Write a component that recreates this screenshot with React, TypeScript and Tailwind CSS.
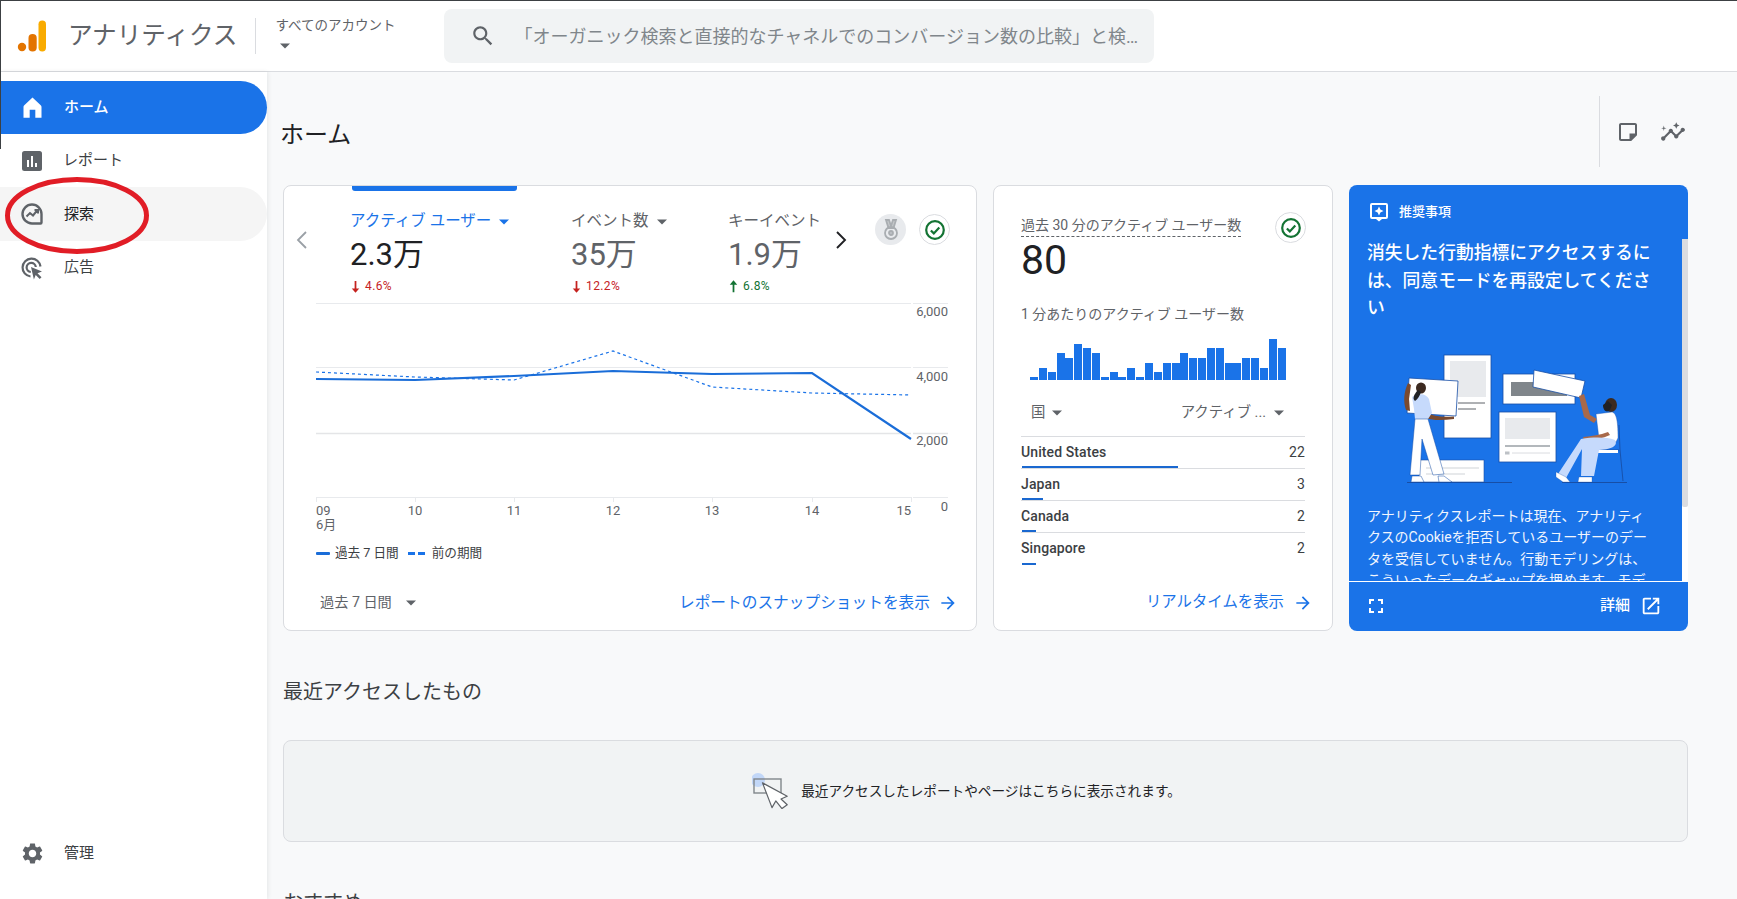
import React from "react";

const Icon = ({ d, className = "", size = 24, fill = "currentColor" }: { d: string; className?: string; size?: number; fill?: string }) => (
  <svg width={size} height={size} viewBox="0 0 24 24" className={`shrink-0 ${className}`} fill={fill}>
    <path d={d} />
  </svg>
);

const P = {
  home: "M4 21V11.5C4 10.9 4.2 10.4 4.7 10L12 3l7.3 7c.5.4.7.9.7 1.5V21h-5.5v-7h-5v7z",
  search:
    "M15.5 14h-.79l-.28-.27C15.41 12.59 16 11.11 16 9.5 16 5.91 13.09 3 9.5 3S3 5.91 3 9.5 5.91 16 9.5 16c1.61 0 3.09-.59 4.23-1.57l.27.28v.79l5 4.99L20.49 19l-4.99-5zm-6 0C7.01 14 5 11.99 5 9.5S7.01 5 9.5 5 14 7.01 14 9.5 11.99 14 9.5 14z",
  gear: "M19.14 12.94c.04-.3.06-.61.06-.94 0-.32-.02-.64-.07-.94l2.03-1.58c.18-.14.23-.41.12-.61l-1.92-3.32c-.12-.22-.37-.29-.59-.22l-2.39.96c-.5-.38-1.03-.7-1.62-.94l-.36-2.54c-.04-.24-.24-.41-.48-.41h-3.84c-.24 0-.43.17-.47.41l-.36 2.54c-.59.24-1.13.57-1.62.94l-2.39-.96c-.22-.08-.47 0-.59.22L2.74 8.87c-.12.21-.08.47.12.61l2.03 1.58c-.05.3-.09.63-.09.94s.02.64.07.94l-2.03 1.58c-.18.14-.23.41-.12.61l1.92 3.32c.12.22.37.29.59.22l2.39-.96c.5.38 1.03.7 1.62.94l.36 2.54c.05.24.24.41.48.41h3.84c.24 0 .44-.17.47-.41l.36-2.54c.59-.24 1.13-.56 1.62-.94l2.39.96c.22.08.47 0 .59-.22l1.92-3.32c.12-.22.07-.47-.12-.61l-2.01-1.58zM12 15.6c-1.98 0-3.6-1.62-3.6-3.6s1.62-3.6 3.6-3.6 3.6 1.62 3.6 3.6-1.62 3.6-3.6 3.6z",
  open: "M19 19H5V5h7V3H5c-1.11 0-2 .9-2 2v14c0 1.1.89 2 2 2h14c1.1 0 2-.9 2-2v-7h-2v7zM14 3v2h3.59l-9.83 9.83 1.41 1.41L19 6.41V10h2V3h-7z",
  full: "M7 14H5v5h5v-2H7v-3zm-2-4h2V7h3V5H5v5zm12 7h-3v2h5v-5h-2v3zM14 5v2h3v3h2V5h-5z",
  arrow: "M12 4l-1.41 1.41L16.17 11H4v2h12.17l-5.58 5.59L12 20l8-8z",
  note: "M19 3H5c-1.1 0-2 .9-2 2v14c0 1.1.9 2 2 2h10.2L21 15.2V5c0-1.1-.9-2-2-2zM5 19V5h14v8.5h-5.5V19H5z",
  insights:
    "M21 8c-1.45 0-2.26 1.44-1.93 2.51l-3.55 3.56c-.3-.09-.74-.09-1.04 0l-2.55-2.55C12.27 10.45 11.46 9 10 9c-1.45 0-2.27 1.44-1.93 2.52l-4.56 4.55C2.44 15.74 1 16.55 1 18c0 1.1.9 2 2 2 1.45 0 2.26-1.44 1.93-2.51l4.55-4.56c.3.09.74.09 1.04 0l2.55 2.55C12.73 16.55 13.54 18 15 18c1.45 0 2.27-1.44 1.93-2.52l3.56-3.55c1.07.33 2.51-.48 2.51-1.93 0-1.1-.9-2-2-2zM15 9l.94-2.07L18 6l-2.06-.93L15 3l-.92 2.07L12 6l2.08.93zM3.5 11L4 9l2-.5L4 8l-.5-2L3 8l-2 .5L3 9z",
  caret: "M6 9l6 6 6-6z",
  down: "M10.6 3h2.8v12H18l-6 7-6-7h4.6z",
  up: "M10.6 21h2.8V9H18l-6-7-6 7h4.6z",
};

const Caret = ({ className = "" }: { className?: string }) => <Icon d={P.caret} size={20} className={className} />;

const CheckBadge = () => (
  <div className="flex h-[31px] w-[31px] items-center justify-center rounded-full border border-[#dadce0] bg-white">
    <svg width="22" height="22" viewBox="0 0 24 24" fill="none" stroke="#137333" strokeWidth="2.4">
      <circle cx="12" cy="12" r="9.6" />
      <path d="M7.5 12.5l3.2 3.2 6-6.4" />
    </svg>
  </div>
);

const Metric = ({
  label,
  value,
  delta,
  up,
  active,
  caret,
  width,
}: {
  label: string;
  value: string;
  delta: string;
  up?: boolean;
  active?: boolean;
  caret?: boolean;
  width: string;
}) => (
  <div className={`flex flex-col ${width}`}>
    <div className={`flex h-[22px] items-center whitespace-nowrap text-[15.5px] ${active ? "text-[#1a73e8]" : "text-[#5f6368]"}`}>
      <span>{label}</span>
      {caret && <Caret className="ml-[3px]" />}
    </div>
    <div className={`mt-[4px] h-[36px] text-[31px] leading-[36px] ${active ? "text-[#202124]" : "text-[#5f6368]"}`}>{value}</div>
    <div className={`mt-[5px] flex h-[16px] items-center text-[12px] tracking-[0.4px] ${up ? "text-[#137333]" : "text-[#c5221f]"}`}>
      <Icon d={up ? P.up : P.down} size={15} className="-ml-[2px] mr-[2px]" />
      {delta}
    </div>
  </div>
);

const solid = "0,76 99,77 198,73 297,68 396,71 496,70 595,136";
const dashed = "0,69 99,74 198,77 297,48 396,84 496,90 595,92";

const LineChart = () => {
  const labelClass = "fill-[#5f6368] text-[13px]";
  const ticks = [
    [0, "09"],
    [99, "10"],
    [198, "11"],
    [297, "12"],
    [396, "13"],
    [496, "14"],
  ] as const;
  return (
    <svg width="634" height="232" viewBox="0 0 634 232" className="block">
      {[0, 64, 130, 194].map((y) => (
        <g key={y} stroke={y === 130 ? "#e4e5e7" : "#e8eaed"} strokeWidth={y === 130 ? 1.5 : 1}>
          <line x1="0" x2="595" y1={y + 0.5} y2={y + 0.5} />
          <line x1="597" x2="632" y1={y + 0.5} y2={y + 0.5} />
        </g>
      ))}
      {[0, 99, 198, 297, 396, 496, 595].map((x) => (
        <line key={x} x1={x + 0.5} x2={x + 0.5} y1="194" y2="199" stroke="#e8eaed" />
      ))}
      <polyline points={dashed} fill="none" stroke="#1a73e8" strokeWidth="1.2" strokeDasharray="3 3" />
      <polyline points={solid} fill="none" stroke="#1a6dd8" strokeWidth="2.2" />
      <g className={labelClass} textAnchor="end">
        <text x="632" y="13">6,000</text>
        <text x="632" y="78">4,000</text>
        <text x="632" y="142">2,000</text>
        <text x="632" y="208">0</text>
      </g>
      <g className={labelClass}>
        {ticks.map(([x, t], i) => (
          <text key={t} x={x} y="212" textAnchor={i === 0 ? "start" : "middle"}>
            {t}
          </text>
        ))}
        <text x="595" y="212" textAnchor="end">15</text>
        <text x="0" y="226">6月</text>
      </g>
    </svg>
  );
};

const MiniBars = () => {
  const heights = [3, 12, 8, 27, 22, 36, 32, 27, 3, 8, 3, 12, 3, 17, 8, 17, 17, 27, 22, 22, 32, 32, 17, 17, 22, 22, 12, 41, 32];
  return (
    <div className="ml-[9px] flex h-[41px] w-[256px] items-end justify-between">
      {heights.map((h, i) => (
        <div key={i} className="w-[8px] bg-[#1a73e8]" style={{ height: h }} />
      ))}
    </div>
  );
};

const Row = ({ name, value, bar, line = true }: { name: string; value: string; bar: number; line?: boolean }) => (
  <div className={`relative h-[32px] ${line ? "border-b border-[#dadce0]" : ""}`}>
    <div className="flex h-[31px] items-center justify-between pb-[1px] text-[14px] font-medium tracking-[0.1px] text-[#3c4043]">
      <span>{name}</span>
      <span className="font-normal">{value}</span>
    </div>
    <div className="absolute bottom-0 left-[1px] h-[2px] bg-[#1a68d0]" style={{ width: bar }} />
  </div>
);

const Illustration = () => (
  <svg width="240" height="145" viewBox="0 0 240 145" className="block">
    {/* ground lines */}
    <path d="M13 135.5H118M168 135.5H233" stroke="#174ea6" strokeWidth="1" />
    {/* tall doc */}
    <rect x="50" y="8" width="47" height="83" fill="#fff" stroke="#174ea6" strokeWidth="0.8" />
    <rect x="56" y="14" width="36" height="36" fill="#e8eaed" />
    <path d="M64 56H91M64 62H82" stroke="#5f6368" strokeWidth="1" />
    {/* bottom doc */}
    <rect x="25" y="113" width="65" height="22" fill="#fff" stroke="#174ea6" strokeWidth="0.6" />
    <path d="M32 121H85M32 127H71" stroke="#e0e2e5" strokeWidth="1.5" />
    {/* top-right doc */}
    <rect x="109" y="27" width="72" height="30" fill="#fff" stroke="#174ea6" strokeWidth="0.8" />
    <rect x="117" y="35" width="56" height="14" fill="#80868b" />
    {/* mid doc */}
    <rect x="105" y="65" width="57" height="50" fill="#fff" stroke="#174ea6" strokeWidth="0.8" />
    <rect x="111" y="71" width="45" height="21" fill="#e8eaed" />
    <path d="M111 99H156" stroke="#9aa0a6" strokeWidth="1.5" />
    <path d="M118 106H156" stroke="#dadce0" strokeWidth="1" />
    <rect x="111" y="104.5" width="4.5" height="3" fill="#bdc1c6" />
    {/* held tilted doc */}
    <path d="M140 23L191 34 187 51 139 40z" fill="#fff" stroke="#174ea6" strokeWidth="0.8" />
    {/* woman: held board */}
    <path d="M15 31L64 34 62 69 13 66z" fill="#fff" stroke="#174ea6" strokeWidth="0.8" />
    <path d="M14 36C10 44 9 55 12 63L16 64 15 52 17 38z" fill="#7a4a2f" />
    <path d="M30 65C40 70 50 70 60 69.5L60 72C50 73 40 74 32 71z" fill="#7a4a2f" />
    <path d="M18 50C24 46 32 46 35 52L38 66 34 72H21L20 62z" fill="#c6dafc" />
    <ellipse cx="27" cy="41" rx="5" ry="5.5" fill="#3c2a20" />
    <path d="M24 43C20 47 18 52 21 54 24 52 26 48 27 45z" fill="#202124" />
    <path d="M21 72H34L50 127 39 128 28 92 26 128H16z" fill="#fff" stroke="#174ea6" strokeWidth="0.5" />
    <path d="M17 135L18 129H27L30 135zM45 135L44 129H50L58 135z" fill="#fff" stroke="#174ea6" strokeWidth="0.5" />
    {/* man */}
    <path d="M185 49L190 47 196 68 203 72 200 76 190 70z" fill="#a8694a" />
    <ellipse cx="217" cy="58" rx="6" ry="7" fill="#3c2a20" />
    <path d="M209 58C209 64 213 66 216 63L218 58 214 54z" fill="#202124" />
    <path d="M202 67L218 65C222 66 224 72 224 91L222 95 205 92z" fill="#fff" stroke="#174ea6" strokeWidth="0.4" />
    <path d="M189 90C198 89 206 88 214 85L216 88C207 92 198 94 190 93z" fill="#a8694a" />
    <path d="M225 78L226 103 229 134M200 103H225" stroke="#174ea6" strokeWidth="0.9" fill="none" />
    <rect x="200" y="103" width="24" height="3" fill="#fff" />
    <path d="M187 92C200 90 212 90 221 93 224 98 220 102 205 103L200 129H187L188 102 172 131 164 127z" fill="#c6dafc" />
    <path d="M162 125L172 130 176 135 169 135 162 130z M185 130H198L198 135 184 135z" fill="#fff" stroke="#174ea6" strokeWidth="0.3" />
  </svg>
);

export default function App() {
  return (
    <div className="relative flex h-screen w-full flex-col overflow-hidden border-t-[1px] border-[#3c4043] bg-[#f8f9fa] font-['Roboto','Noto_Sans_CJK_JP',sans-serif]">
      {/* screen-capture edge and hand-drawn mark */}
      <div className="absolute left-0 top-0 z-30 h-[148px] w-[1px] bg-[#3c4043]" />
      <svg className="absolute left-[4px] top-[176px] z-30" width="146" height="78" viewBox="0 0 146 78" fill="none">
        <ellipse cx="73" cy="38.5" rx="69.5" ry="36" stroke="#e11d26" strokeWidth="5" />
      </svg>

      {/* header */}
      <header className="flex h-[71px] shrink-0 items-center border-b border-[#dadce0] bg-white">
        <svg width="30" height="34" viewBox="0 0 30 34" className="ml-[17px] shrink-0">
          <circle cx="5" cy="28" r="4.2" fill="#e37400" />
          <rect x="11.5" y="15" width="8.2" height="17.5" rx="4.1" fill="#e37400" />
          <rect x="21.5" y="1.5" width="7.5" height="31" rx="3.7" fill="#f9ab00" />
        </svg>
        <div className="ml-[21px] whitespace-nowrap text-[24.6px] text-[#5f6368]">アナリティクス</div>
        <div className="ml-[18px] h-[36px] w-px bg-[#dadce0]" />
        <div className="ml-[19px] flex w-[169px] flex-col self-start pt-[15px]">
          <div className="whitespace-nowrap text-[13.5px] leading-[18px] text-[#5f6368]">すべてのアカウント</div>
          <Caret className="mt-[2px] text-[#5f6368]" />
        </div>
        <div className="flex h-[54px] w-[710px] items-center rounded-[8px] bg-[#f1f3f4]">
          <Icon d={P.search} size={26} className="ml-[26px] text-[#5f6368]" />
          <div className="ml-[18px] w-[635px] truncate whitespace-nowrap text-[18px] text-[#80868b]">
            「オーガニック検索と直接的なチャネルでのコンバージョン数の比較」と検索してみてください
          </div>
        </div>
      </header>

      <div className="flex min-h-0 flex-1">
        {/* sidebar */}
        <aside className="z-10 flex w-[267px] shrink-0 flex-col justify-between bg-white pb-[19px] pt-[9px] shadow-[1px_0_4px_rgba(60,64,67,0.1)]">
          <nav className="flex flex-col text-[15px] text-[#3c4043]">
            <div className="flex h-[53px] items-center rounded-r-[27px] bg-[#1a73e8] pl-[19px] font-medium text-white">
              <Icon d={P.home} size={27} />
              <span className="ml-[18px]">ホーム</span>
            </div>
            <div className="flex h-[53px] items-center pl-[21px]">
              <svg width="22" height="22" viewBox="0 0 22 22" className="shrink-0">
                <rect x="1" y="1" width="20" height="20" rx="2.5" fill="#5f6368" />
                <path d="M6 10h2v7H6zM10 6h2v11h-2zM14 13h2v4h-2z" fill="#fff" />
              </svg>
              <span className="ml-[20px]">レポート</span>
            </div>
            <div className="flex h-[54px] items-center rounded-r-[27px] bg-[#f5f5f5] pl-[20px] text-[#202124]">
              <svg width="24" height="24" viewBox="0 0 24 24" fill="none" stroke="#5f6368" strokeWidth="2.4" className="shrink-0">
                <path d="M12 2.5a9.5 9.5 0 1 0 0 19h8.5a1 1 0 0 0 1-1V12A9.5 9.5 0 0 0 12 2.5z" />
                <path d="M6.5 14.5l3.5-3.5 3 2.5 4.5-5.5M14.5 8h3.5v3.5" strokeWidth="2" />
              </svg>
              <span className="ml-[20px]">探索</span>
            </div>
            <div className="flex h-[53px] items-center pl-[20px]">
              <svg width="24" height="24" viewBox="0 0 24 24" fill="none" stroke="#5f6368" strokeWidth="2.2" className="shrink-0">
                <path d="M10.5 20.5A9 9 0 1 1 20.5 10.5M10.8 16A4.6 4.6 0 1 1 15.8 11" />
                <path d="M11 11l11 4.5-4.5 1.8 4 4-1.8 1.8-4-4-1.8 4.5z" fill="#5f6368" stroke="none" />
              </svg>
              <span className="ml-[20px]">広告</span>
            </div>
          </nav>
          <div className="flex h-[54px] items-center pl-[20px] text-[15px] text-[#3c4043]">
            <Icon d={P.gear} size={25} className="text-[#5f6368]" />
            <span className="ml-[19px]">管理</span>
          </div>
        </aside>

        {/* main */}
        <main className="min-w-0 flex-1 pl-[16px] pr-[49px]">
          <div className="flex h-[113px] items-center justify-between">
            <h1 className="-ml-[3px] pt-[13px] text-[24px] font-normal leading-[32px] text-[#202124]">ホーム</h1>
            <div className="mr-[2px] mt-[24px] flex h-[71px] items-center self-start border-l border-[#dadce0] pl-[16px]">
              <Icon d={P.note} size={24} className="text-[#5f6368]" />
              <Icon d={P.insights} size={26} className="ml-[20px] text-[#5f6368]" />
            </div>
          </div>

          <div className="flex h-[446px] gap-[16px]">
            {/* overview card */}
            <section className="relative flex w-[694px] flex-col rounded-[8px] border border-[#dadce0] bg-white">
              <div className="absolute left-[68px] top-0 h-[5px] w-[165px] rounded-b-[3px] bg-[#1a73e8]" />
              <div className="flex h-[117px] shrink-0 items-start pt-[25px]">
                <div className="mt-[18px] flex w-[66px] justify-center pr-[30px]">
                  <svg width="14" height="22" viewBox="0 0 14 22" fill="none" stroke="#9aa0a6" strokeWidth="1.8">
                    <path d="M11 3L3 11l8 8" />
                  </svg>
                </div>
                <Metric width="w-[221px]" active caret label="アクティブ ユーザー" value="2.3万" delta="4.6%" />
                <Metric width="w-[157px]" caret label="イベント数" value="35万" delta="12.2%" />
                <Metric width="w-[106px]" label="キーイベント" value="1.9万" delta="6.8%" up />
                <svg width="14" height="22" viewBox="0 0 14 22" fill="none" stroke="#202124" strokeWidth="1.9" className="mt-[18px] shrink-0">
                  <path d="M3 3l8 8-8 8" />
                </svg>
                <div className="ml-[27px] mt-[3px] flex h-[31px] w-[31px] shrink-0 items-center justify-center rounded-full bg-[#e8eaed]">
                  <svg width="20" height="22" viewBox="0 0 20 22" fill="none" stroke="#a9adb1" strokeWidth="1.8">
                    <path d="M5 1h3l2 6 2-6h3l-2.5 8h-5z" fill="#c4c7ca" />
                    <circle cx="10" cy="14" r="6" />
                    <circle cx="10" cy="14" r="2" fill="#bdc1c6" />
                  </svg>
                </div>
                <div className="ml-[13px] mt-[3px]">
                  <CheckBadge />
                </div>
              </div>
              <div className="ml-[32px]">
                <LineChart />
              </div>
              <div className="ml-[32px] mt-[10px] flex h-[16px] items-center text-[12.6px] text-[#3c4043]">
                <span className="h-[3px] w-[14px] rounded-[1px] bg-[#1a6dd8]" />
                <span className="ml-[5px]">過去 7 日間</span>
                <span className="ml-[9px] flex gap-[3px]">
                  <span className="h-[3px] w-[7px] bg-[#1a73e8]" />
                  <span className="h-[3px] w-[7px] bg-[#1a73e8]" />
                </span>
                <span className="ml-[7px]">前の期間</span>
              </div>
              <div className="mt-auto flex h-[54px] items-center justify-between pl-[36px] pr-[18px]">
                <div className="flex items-center text-[14.2px] text-[#5f6368]">
                  <span>過去 7 日間</span>
                  <Caret className="ml-[9px]" />
                </div>
                <div className="flex items-center text-[15.7px] text-[#1a73e8]">
                  <span>レポートのスナップショットを表示</span>
                  <Icon d={P.arrow} size={20} className="ml-[8px]" />
                </div>
              </div>
            </section>

            {/* realtime card */}
            <section className="flex w-[340px] flex-col rounded-[8px] border border-[#dadce0] bg-white pl-[27px] pr-[27px]">
              <div className="flex items-start justify-between pt-[27px]">
                <div>
                  <div className="inline-block whitespace-nowrap border-b border-dashed border-[#5f6368] pb-[1px] text-[14px] leading-[20px] text-[#5f6368]">
                    過去 30 分のアクティブ ユーザー数
                  </div>
                  <div className="-mt-[1px] text-[41px] font-normal leading-[48px] text-[#202124]">80</div>
                </div>
                <div className="-mr-[1px] mt-[-1px]">
                  <CheckBadge />
                </div>
              </div>
              <div className="mt-[20px] whitespace-nowrap text-[14px] leading-[20px] text-[#5f6368]">1 分あたりのアクティブ ユーザー数</div>
              <div className="mt-[15px]">
                <MiniBars />
              </div>
              <div className="mt-[21px] flex h-[24px] items-center justify-between pl-[10px] pr-[16px] text-[14.4px] text-[#5f6368]">
                <div className="flex items-center">
                  <span>国</span>
                  <Caret className="ml-[2px]" />
                </div>
                <div className="flex items-center">
                  <span>アクティブ ...</span>
                  <Caret className="ml-[3px]" />
                </div>
              </div>
              <div className="mt-[11px] border-t border-[#dadce0]">
                <Row name="United States" value="22" bar={156} />
                <Row name="Japan" value="3" bar={21} />
                <Row name="Canada" value="2" bar={14} />
                <Row name="Singapore" value="2" bar={14} line={false} />
              </div>
              <div className="mt-auto -mr-[8px] flex h-[54px] items-center justify-end text-[15.4px] text-[#1a73e8]">
                <span>リアルタイムを表示</span>
                <Icon d={P.arrow} size={20} className="ml-[9px]" />
              </div>
            </section>

            {/* recommendation card */}
            <section className="flex w-[339px] flex-col overflow-hidden rounded-[8px] bg-[#1a73e8] text-white">
              <div className="flex h-[54px] shrink-0 items-center pl-[20px]">
                <svg width="20" height="20" viewBox="0 0 20 20" className="shrink-0">
                  <path d="M3 1h14a2 2 0 0 1 2 2v12a2 2 0 0 1-2 2h-4l-3 2.5L7 17H3a2 2 0 0 1-2-2V3a2 2 0 0 1 2-2z" fill="#fff" />
                  <path d="M3 3h14v12H3z" fill="#1a73e8" />
                  <path d="M10 4.5l1.4 3.1 3.1 1.4-3.1 1.4L10 13.5l-1.4-3.1L5.5 9l3.1-1.4z" fill="#fff" />
                </svg>
                <span className="ml-[10px] text-[13px] font-medium">推奨事項</span>
              </div>
              <div className="flex min-h-0 flex-1">
                <div className="min-w-0 flex-1 overflow-hidden pl-[18px] pr-[26px]">
                  <div className="text-[17.8px] font-medium leading-[27.5px]">消失した行動指標にアクセスするには、同意モードを再設定してください</div>
                  <div className="mt-[25px] flex justify-start pl-[27px]">
                    <Illustration />
                  </div>
                  <div className="mt-[14px] text-[14px] leading-[21.6px] text-[#f1f6fe]">
                    アナリティクスレポートは現在、アナリティクスのCookieを拒否しているユーザーのデータを受信していません。行動モデリングは、こういったデータギャップを埋めます。モデルは
                  </div>
                </div>
                <div className="w-[6px] shrink-0 bg-white">
                  <div className="h-[268px] rounded-b-[2px] bg-[#dadce0]" />
                </div>
              </div>
              <div className="flex h-[50px] shrink-0 items-center justify-between border-t border-white pb-[2px] pl-[15px] pr-[26px]">
                <Icon d={P.full} size={24} />
                <div className="flex items-center">
                  <span className="text-[15px] font-medium">詳細</span>
                  <Icon d={P.open} size={22} className="ml-[10px]" />
                </div>
              </div>
            </section>
          </div>

          <h2 className="mt-[47px] text-[20px] font-normal leading-[28px] text-[#3c4043]">最近アクセスしたもの</h2>
          <div className="mt-[34px] flex h-[102px] items-center justify-center rounded-[8px] border border-[#dadce0] bg-[#f1f3f4] pr-[38px]">
            <svg width="42" height="36" viewBox="0 0 42 36" className="shrink-0">
              <circle cx="6" cy="7" r="7" fill="#aecbfa" opacity="0.7" />
              <rect x="2" y="6" width="27" height="14" fill="none" stroke="#80868b" strokeWidth="1.4" />
              <path d="M10 12L36 26 29.5 29 36 35 30.5 39 24 31 20 38z" fill="#fff" stroke="#5f6368" strokeWidth="1.3" strokeLinejoin="round" transform="translate(1 -1.5) scale(0.95)" />
            </svg>
            <span className="ml-[7px] whitespace-nowrap text-[13.65px] text-[#202124]">最近アクセスしたレポートやページはこちらに表示されます。</span>
          </div>
          <h2 className="mt-[47px] text-[20px] font-normal leading-[28px] text-[#3c4043]">おすすめ</h2>
        </main>
      </div>
    </div>
  );
}
